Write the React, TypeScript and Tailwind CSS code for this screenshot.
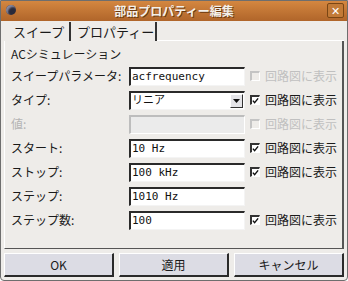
type Row = {
  label: string
  value: string
  kind?: 'select'
  disabled?: boolean
  check?: 'on' | 'off' | 'none'
}

const rows: Row[] = [
  { label: 'スイープパラメータ:', value: 'acfrequency', check: 'off' },
  { label: 'タイプ:', value: 'リニア', kind: 'select', check: 'on' },
  { label: '値:', value: '', disabled: true, check: 'off' },
  { label: 'スタート:', value: '10 Hz', check: 'on' },
  { label: 'ストップ:', value: '100 kHz', check: 'on' },
  { label: 'ステップ:', value: '1010 Hz', check: 'none' },
  { label: 'ステップ数:', value: '100', check: 'on' },
]

const jp = "font-['Noto_Sans_CJK_JP','DejaVu_Sans',sans-serif]"
const mono = "font-['DejaVu_Sans_Mono','Noto_Sans_CJK_JP',monospace]"

function CheckBox({ on, dim }: { on: boolean; dim?: boolean }) {
  return (
    <span
      className={`flex h-[10px] w-[10px] items-center justify-center border-t-2 border-l-2 border-b border-r ${
        dim ? 'border-t-[#c4c4c4] border-l-[#c4c4c4] border-b-white border-r-white' : 'border-t-[#333] border-l-[#333] border-b-white border-r-white bg-white'
      }`}
    >
      {on && (
        <svg width="8" height="8" viewBox="0 0 8 8">
          <path d="M1 3.5 L3 6 L7 1" stroke="#111" strokeWidth="1.6" fill="none" />
        </svg>
      )}
    </span>
  )
}

function FormRow({ row }: { row: Row }) {
  const dim = row.disabled
  return (
    <div className="flex h-[24px] items-center">
      <div className={`w-[118px] whitespace-nowrap text-[12px] ${dim ? 'text-[#b4b4b4]' : 'text-[#1a1a1a]'}`}>{row.label}</div>
      <div
        className={`flex h-[19px] w-[116px] items-center border-t-2 border-l-2 border-b border-r pl-[1px] ${
          dim
            ? 'border-t-[#bdbdbd] border-l-[#bdbdbd] border-b-white border-r-white bg-[#ebebeb]'
            : 'border-t-[#2a2a2a] border-l-[#2a2a2a] border-b-[#f4f4f4] border-r-[#f4f4f4] bg-white'
        }`}
      >
        <span className={`flex-1 whitespace-nowrap text-[11px] leading-none text-[#111] ${mono}`}>{row.value}</span>
        {row.kind === 'select' && (
          <span className="mr-[1px] flex h-[14px] w-[13px] items-center justify-center border-t border-l border-b border-r border-t-white border-l-white border-b-[#333] border-r-[#333] bg-[#e4e4e8]">
            <svg width="7" height="4" viewBox="0 0 7 4">
              <path d="M0 0 H7 L3.5 4 Z" fill="#111" />
            </svg>
          </span>
        )}
      </div>
      {row.check !== 'none' && (
        <div className="ml-[5px] flex items-center gap-[5px]">
          <CheckBox on={row.check === 'on'} dim={row.check === 'off'} />
          <span className={`whitespace-nowrap text-[12px] ${row.check === 'off' ? 'text-[#c0c0c0]' : 'text-[#1a1a1a]'}`}>回路図に表示</span>
        </div>
      )}
    </div>
  )
}

export default function App() {
  return (
    <div className={`flex h-[281px] w-[348px] flex-col overflow-hidden rounded-b-[4px] border border-[#6e6e6e] bg-[#eeece9] ${jp}`}>
      <div className="relative flex h-[20px] shrink-0 items-center justify-center bg-gradient-to-b from-[#d48740] to-[#b0652a]">
        <span className="absolute left-[5px] top-[4px] h-[10px] w-[10px] rounded-full bg-[#2a2a3a] shadow-[inset_2px_2px_2px_#8a8aa0]" />
        <span className="text-[12px] font-bold text-[#f4f0ea] [text-shadow:1px_1px_0_#6b3a10]">部品プロパティー編集</span>
        <span className="absolute right-[3px] top-[2px] flex h-[15px] w-[17px] items-center justify-center rounded-[2px] border border-[#7a4614] bg-[#c27a37] text-[11px] font-bold text-white">
          ✕
        </span>
      </div>

      <div className="flex flex-1 flex-col px-[3px] pt-[1px] pb-[3px]">
        <div className="flex h-[19px] items-end text-[13px] text-[#1a1a1a]">
          <div className="flex h-[19px] w-[67px] items-center border-r-2 border-[#333] pl-[9px]">スイープ</div>
          <div className="flex h-[19px] w-[86px] items-center border-r-2 border-[#333] pl-[6px]">プロパティー</div>
          <div className="h-[1px] flex-1 bg-white" />
        </div>

        <div className="flex flex-1 flex-col border-r-2 border-b border-[#555] border-l border-l-white pl-[6px] pt-[3px]">
          <div className="h-[20px] whitespace-nowrap text-[12px] leading-[20px] text-[#1a1a1a]">ACシミュレーション</div>
          {rows.map(row => (
            <FormRow key={row.label} row={row} />
          ))}
        </div>

        <div className="mt-[4px] grid grid-cols-3 gap-[5px] text-[12px] text-[#1a1a1a]">
          {['OK', '適用', 'キャンセル'].map(b => (
            <div
              key={b}
              className="flex h-[24px] items-center justify-center border-t border-l border-b-2 border-r-2 border-t-white border-l-white border-b-[#2a2a2a] border-r-[#2a2a2a] bg-[#dcdce4]"
            >
              {b}
            </div>
          ))}
        </div>
      </div>
    </div>
  )
}
